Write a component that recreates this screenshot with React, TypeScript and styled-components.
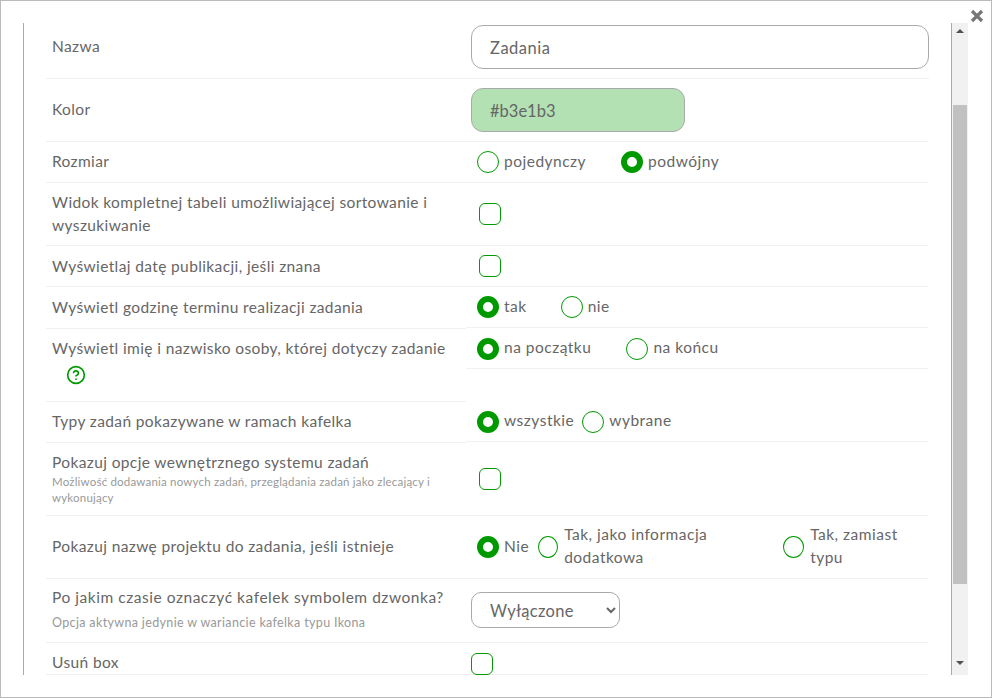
import styled, { createGlobalStyle } from "styled-components";
import { CircleHelp } from "lucide-react";

const GlobalStyle = createGlobalStyle`
  html, body {
    margin: 0;
    padding: 0;
    background: #fff;
  }
  body {
    font-family: Lato, "Open Sans", sans-serif;
    color: #666;
  }
`;

function App() {
  return (
    <Frame>
      <GlobalStyle />
      <Close aria-label="close">
        <svg width="14" height="14" viewBox="0 0 14 14">
          <path d="M2 2 L12 12 M12 2 L2 12" stroke="#777" strokeWidth="3.2" />
        </svg>
      </Close>
      <Panel>
        <Content>
          <Row $h={56}>
            <LabelCell $pb={8}>
              <Label>Nazwa</Label>
            </LabelCell>
            <FieldCell $pb={7} $indent={5}>
              <TextField defaultValue="Zadania" />
            </FieldCell>
          </Row>
          <Row $h={63}>
            <LabelCell>
              <Label>Kolor</Label>
            </LabelCell>
            <FieldCell $indent={5}>
              <ColorField defaultValue="#b3e1b3" />
            </FieldCell>
          </Row>
          <Row $h={41}>
            <LabelCell $pb={2}>
              <Label>Rozmiar</Label>
            </LabelCell>
            <FieldCell>
              <Option $gap={35}>
                <Radio name="size" />
                <OptionText>pojedynczy</OptionText>
              </Option>
              <Option>
                <Radio name="size" defaultChecked />
                <OptionText>podwójny</OptionText>
              </Option>
            </FieldCell>
          </Row>
          <Row $h={63}>
            <LabelCell $pb={0}>
              <Label>
                Widok kompletnej tabeli umożliwiającej sortowanie i
                <br />
                wyszukiwanie
              </Label>
            </LabelCell>
            <FieldCell $indent={13}>
              <Check />
            </FieldCell>
          </Row>
          <Row $h={41}>
            <LabelCell $pb={0}>
              <Label>Wyświetlaj datę publikacji, jeśli znana</Label>
            </LabelCell>
            <FieldCell $indent={13}>
              <Check />
            </FieldCell>
          </Row>
          <Row $h={42}>
            <LabelCell>
              <Label>Wyświetl godzinę terminu realizacji zadania</Label>
            </LabelCell>
            <FieldCell $h={41}>
              <Option $gap={34}>
                <Radio name="hour" defaultChecked />
                <OptionText>tak</OptionText>
              </Option>
              <Option>
                <Radio name="hour" />
                <OptionText>nie</OptionText>
              </Option>
            </FieldCell>
          </Row>
          <Row $h={73}>
            <LabelCell $top>
              <Label>Wyświetl imię i nazwisko osoby, której dotyczy zadanie</Label>
              <HelpIcon size={20} strokeWidth={2} />
            </LabelCell>
            <FieldCell $h={40}>
              <Option $gap={35}>
                <Radio name="person" defaultChecked />
                <OptionText>na początku</OptionText>
              </Option>
              <Option>
                <Radio name="person" />
                <OptionText>na końcu</OptionText>
              </Option>
            </FieldCell>
          </Row>
          <Row $h={41}>
            <LabelCell>
              <Label>Typy zadań pokazywane w ramach kafelka</Label>
            </LabelCell>
            <FieldCell $h={40}>
              <Option $gap={8}>
                <Radio name="types" defaultChecked />
                <OptionText>wszystkie</OptionText>
              </Option>
              <Option>
                <Radio name="types" />
                <OptionText>wybrane</OptionText>
              </Option>
            </FieldCell>
          </Row>
          <Row $h={73}>
            <LabelCell $pb={2}>
              <Label>Pokazuj opcje wewnętrznego systemu zadań</Label>
              <Hint>
                Możliwość dodawania nowych zadań, przeglądania zadań jako zlecający i
                <br />
                wykonujący
              </Hint>
            </LabelCell>
            <FieldCell $indent={13}>
              <Check />
            </FieldCell>
          </Row>
          <Row $h={63}>
            <LabelCell>
              <Label>Pokazuj nazwę projektu do zadania, jeśli istnieje</Label>
            </LabelCell>
            <FieldCell>
              <Option $gap={9}>
                <Radio name="project" defaultChecked />
                <OptionText>Nie</OptionText>
              </Option>
              <Option $width={245} $space={6}>
                <Radio name="project" $w={20} />
                <OptionText>
                  Tak, jako informacja
                  <br />
                  dodatkowa
                </OptionText>
              </Option>
              <Option $space={6}>
                <Radio name="project" $w={21} />
                <OptionText>
                  Tak, zamiast
                  <br />
                  typu
                </OptionText>
              </Option>
            </FieldCell>
          </Row>
          <Row $h={64}>
            <LabelCell $pb={5}>
              <Label $spacing={0.54}>Po jakim czasie oznaczyć kafelek symbolem dzwonka?</Label>
              <Hint $mt={6} $large>
                Opcja aktywna jedynie w wariancie kafelka typu Ikona
              </Hint>
            </LabelCell>
            <FieldCell $indent={5} $pb={1}>
              <Select defaultValue="off">
                <option value="off">Wyłączone</option>
              </Select>
            </FieldCell>
          </Row>
          <LastRow>
            <LabelCell $pt={9} $pb={1}>
              <Label>Usuń box</Label>
            </LabelCell>
            <FieldCell $indent={5} $pt={10}>
              <Check />
            </FieldCell>
          </LastRow>
        </Content>
        <Scrollbar>
          <ArrowUp />
          <Thumb />
          <ArrowDown />
        </Scrollbar>
      </Panel>
    </Frame>
  );
}

export default App;

const Frame = styled.div`
  position: relative;
  box-sizing: border-box;
  width: 992px;
  height: 698px;
  border: 1px solid #bbb;
  padding: 22px 23px 22px 22px;
`;

const Close = styled.div`
  position: absolute;
  top: 8px;
  right: 7px;
  line-height: 0;
`;

const Panel = styled.div`
  display: flex;
  height: 652px;
  width: 945px;
`;

const Content = styled.div`
  flex: 1;
  overflow: hidden;
  border-left: 1px solid #aaa;
  padding: 0 23px 0 22px;
`;

const Row = styled.div<{ $h: number }>`
  display: flex;
  align-items: flex-start;
  height: ${({ $h }) => $h}px;
`;

const LastRow = styled.div`
  display: flex;
  align-items: flex-start;
  height: 32px;
`;

const LabelCell = styled.div<{ $top?: boolean; $pb?: number; $pt?: number }>`
  box-sizing: border-box;
  width: 420px;
  height: 100%;
  flex: none;
  display: flex;
  flex-direction: column;
  justify-content: ${({ $top }) => ($top ? "flex-start" : "center")};
  align-items: flex-start;
  padding: ${({ $top, $pt }) => ($top ? 8 : $pt ?? 0)}px 0 ${({ $pb }) => $pb ?? 1}px 6px;
  border-bottom: 1px solid #f0f0f0;
`;

const FieldCell = styled.div<{ $h?: number; $indent?: number; $pb?: number; $pt?: number }>`
  box-sizing: border-box;
  flex: 1;
  height: ${({ $h }) => ($h ? `${$h}px` : "100%")};
  display: flex;
  align-items: ${({ $pt }) => ($pt ? "flex-start" : "center")};
  padding: ${({ $pt }) => $pt ?? 0}px 0 ${({ $pb }) => $pb ?? 0}px ${({ $indent }) => $indent ?? 11}px;
  border-bottom: 1px solid #f0f0f0;
`;

const Label = styled.div<{ $spacing?: number }>`
  font-size: 15.5px;
  line-height: 23px;
  letter-spacing: ${({ $spacing }) => $spacing ?? 0.38}px;
  color: #666;
`;

const Hint = styled.div<{ $mt?: number; $large?: boolean }>`
  margin-top: ${({ $mt }) => $mt ?? 0}px;
  font-size: ${({ $large }) => ($large ? 12.5 : 11.5)}px;
  line-height: 16px;
  letter-spacing: ${({ $large }) => ($large ? 0.35 : 0.2)}px;
  color: #999;
`;

const HelpIcon = styled(CircleHelp)`
  display: block;
  margin: 5px 0 0 14px;
  color: #090;
`;

const TextField = styled.input`
  box-sizing: border-box;
  width: 458px;
  height: 44px;
  padding: 2px 18px 0;
  border: 1px solid #aaa;
  border-radius: 12px;
  font: 16.5px Lato, sans-serif;
  letter-spacing: 0.5px;
  color: #666;
  background: #fff;
  outline: none;
`;

const ColorField = styled(TextField)`
  width: 214px;
  letter-spacing: 0;
  background: #b3e1b3;
`;

const Select = styled.select`
  box-sizing: border-box;
  width: 149px;
  height: 36px;
  padding: 2px 14px 0;
  border: 1px solid #aaa;
  border-radius: 10px;
  font: 16.5px Lato, sans-serif;
  letter-spacing: 0.3px;
  color: #666;
  background: #fff;
`;

const Option = styled.label<{ $gap?: number; $width?: number; $space?: number }>`
  display: inline-flex;
  align-items: center;
  gap: ${({ $space }) => $space ?? 5}px;
  flex: none;
  width: ${({ $width }) => ($width ? `${$width}px` : "auto")};
  margin-right: ${({ $gap }) => $gap ?? 0}px;
`;

const OptionText = styled.span`
  margin-top: -2px;
  font-size: 15.5px;
  line-height: 23px;
  letter-spacing: 0.5px;
  color: #666;
`;

const Radio = styled.input.attrs({ type: "radio" })<{ $w?: number }>`
  appearance: none;
  box-sizing: border-box;
  flex: none;
  width: ${({ $w }) => $w ?? 22}px;
  height: 22px;
  margin: 0;
  border: 1px solid #090;
  border-radius: 50%;
  background: #fff;

  &:checked {
    border: 6.5px solid #090;
  }
`;

const Check = styled.input.attrs({ type: "checkbox" })`
  appearance: none;
  box-sizing: border-box;
  display: block;
  width: 22px;
  height: 22px;
  margin: 0;
  border: 1px solid #090;
  border-radius: 6px;
  background: #fff;
`;

const Scrollbar = styled.div`
  box-sizing: border-box;
  flex: none;
  width: 17px;
  height: 100%;
  display: flex;
  flex-direction: column;
  align-items: center;
  border-left: 1px solid #aaa;
  background: #f1f1f1;
`;

const ArrowUp = styled.div`
  width: 0;
  height: 0;
  margin-top: 6px;
  border-left: 4px solid transparent;
  border-right: 4px solid transparent;
  border-bottom: 4px solid #505050;
`;

const Thumb = styled.div`
  width: 14px;
  height: 479px;
  margin-top: 72px;
  background: #c1c1c1;
`;

const ArrowDown = styled.div`
  width: 0;
  height: 0;
  margin-top: 77px;
  border-left: 4px solid transparent;
  border-right: 4px solid transparent;
  border-top: 4px solid #505050;
`;
